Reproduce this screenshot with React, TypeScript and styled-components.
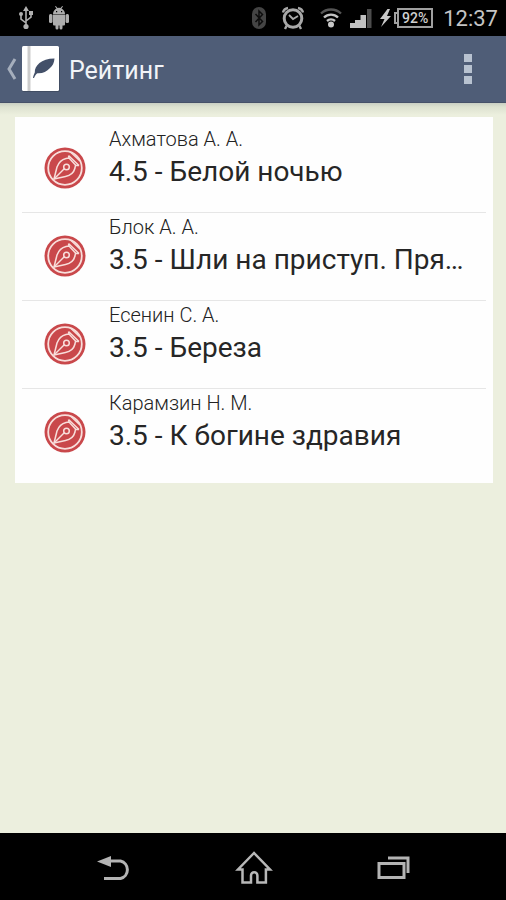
import React from "react";
import styled, { createGlobalStyle } from "styled-components";

const GlobalStyle = createGlobalStyle`
  * { box-sizing: border-box; }
  body { margin: 0; background: #ecefde; }
  button { border: 0; padding: 0; background: none; font: inherit; color: inherit; cursor: pointer; }
  svg { display: block; flex: none; }
`;

const Screen = styled.div`
  display: flex;
  flex-direction: column;
  min-height: 100vh;
  font-family: Roboto, "Noto Sans", sans-serif;
`;

const StatusBar = styled.div`
  display: flex;
  align-items: center;
  justify-content: space-between;
  height: 36px;
  padding: 0 8px 0 18px;
  background: #000;
  color: #c4c4c4;
`;

const StatusGroup = styled.div<{ $gap: number }>`
  display: flex;
  align-items: center;
  gap: ${(p) => p.$gap}px;
`;

const Power = styled.div`
  display: flex;
  align-items: center;
  gap: 3px;
`;

const Battery = styled.span`
  display: flex;
  align-items: center;
  justify-content: center;
  width: 36px;
  height: 20px;
  border: 2px solid #a0a0a0;
  font-size: 14px;
  line-height: 16px;
  font-weight: 500;
  color: #d0d0d0;
`;

const BatteryTip = styled.span`
  width: 3px;
  height: 12px;
  border: 2px solid #a0a0a0;
  border-right: 0;
`;

const BatteryBody = styled.span`
  display: flex;
  align-items: center;
`;

const Clock = styled.time`
  padding-top: 2px;
  font-size: 22px;
  line-height: 34px;
`;

const ActionBar = styled.header`
  display: flex;
  align-items: center;
  justify-content: space-between;
  height: 67px;
  padding: 0 16px 0 6px;
  background: #4f5d77;
  border-bottom: 1px solid #465168;
  color: #f2f4f8;
`;

const UpButton = styled.button`
  display: flex;
  align-items: center;
  gap: 5px;
`;

const Title = styled.h1`
  margin: 0;
  padding: 4px 0 0 4px;
  font-size: 25px;
  line-height: 32px;
  font-weight: 400;
`;

const MenuButton = styled.button`
  display: grid;
  place-items: center;
  width: 44px;
  height: 48px;
`;

const Content = styled.main`
  flex: 1;
  padding: 14px 13px 14px 15px;
  background: linear-gradient(#c9cfc3 0, #dde2d0 4px, #ecefde 12px);
`;

const Card = styled.ul`
  margin: 0;
  padding: 7px;
  list-style: none;
  background: #fefefe;
`;

const Row = styled.li`
  & + & { box-shadow: inset 0 1px #e6e6e6; }
`;

const RowButton = styled.button`
  display: flex;
  align-items: center;
  gap: 23px;
  width: 100%;
  height: 88px;
  padding: 0 14px 0 22px;
  text-align: left;
`;

const RowText = styled.span`
  display: flex;
  flex-direction: column;
  flex: 1;
  align-self: flex-start;
  min-width: 0;
  padding-top: 2px;
`;

const Author = styled.span`
  font-size: 20px;
  line-height: 26px;
  font-weight: 300;
  color: #222;
`;

const PoemTitle = styled.span`
  overflow: hidden;
  text-overflow: ellipsis;
  white-space: nowrap;
  font-size: 28px;
  line-height: 40px;
  color: #262626;
`;

const NavBar = styled.nav`
  display: grid;
  grid-template-columns: repeat(3, 1fr);
  height: 67px;
  padding: 2px 42px 0 44px;
  background: #000;
`;

const NavButton = styled.button`
  display: grid;
  place-items: center;
`;

const UsbIcon = () => (
  <svg width="16" height="24" viewBox="0 0 16 24" fill="none" stroke="#b0b0b0" strokeWidth="1.6">
    <path d="M8 4v16M8 17l-5-4V8M8 15l5-4V7" />
    <path d="M8 0l3 5H5z" fill="#b0b0b0" stroke="none" />
    <circle cx="8" cy="20.500" r="2.600" fill="#b0b0b0" stroke="none" />
    <circle cx="3" cy="8" r="2" fill="#b0b0b0" stroke="none" />
    <path d="M11 5h4v4h-4z" fill="#b0b0b0" stroke="none" />
  </svg>
);

const AndroidIcon = () => (
  <svg width="20" height="24" viewBox="0 0 20 24" fill="#adadad">
    <path d="M4 8c0-3 2-5 3.500-5.600L6 .6l.8-.6 1.700 2a6 6 0 0 1 3 0L13.200 0l.8.6-1.500 1.800C14.500 3.500 16 5.500 16 8z" />
    <path d="M4 8.500h12v10a1 1 0 0 1-1 1h-1.500V22a1.500 1.500 0 0 1-3 0v-2.500h-1V22a1.500 1.500 0 0 1-3 0v-2.500H5a1 1 0 0 1-1-1z" />
    <rect x="0" y="8" width="3.500" height="9" rx="1.500" />
    <rect x="16.500" y="8" width="3.500" height="9" rx="1.500" />
    <path d="M7 5h1.200v1.200H7zM12 5h1.200v1.200H12z" fill="#000" />
  </svg>
);

const BluetoothIcon = () => (
  <svg width="14" height="22" viewBox="0 0 14 22">
    <rect width="14" height="22" rx="7" fill="#444" />
    <path d="M3.500 7l7 7.500L7 18V4l3.500 3.500-7 7.500" fill="none" stroke="#0c0c0c" strokeWidth="1.500" />
  </svg>
);

const AlarmIcon = () => (
  <svg width="24" height="24" viewBox="0 0 24 24" fill="none" stroke="#a8a8a8" strokeWidth="2.400">
    <circle cx="12" cy="12.500" r="8.800" strokeWidth="3" />
    <path d="M8 9l4 4 5-3" strokeWidth="1.800" />
    <path d="M2 6.500C2.500 4 4 2.500 7 2M22 6.500C21.500 4 20 2.500 17 2M5.500 20L4 23M18.500 20l1.500 3" />
  </svg>
);

const WifiIcon = () => (
  <svg width="22" height="20" viewBox="0 0 22 20" fill="none" strokeWidth="2.400">
    <path d="M1 5.500a14.500 14.500 0 0 1 20 0" stroke="#555" />
    <path d="M4 9.500a10 10 0 0 1 14 0M7 13a6 6 0 0 1 8 0" stroke="#c4c4c4" />
    <circle cx="11" cy="16.500" r="3" fill="#c8c8c8" />
  </svg>
);

const SignalIcon = () => (
  <svg width="22" height="20" viewBox="0 0 22 20" fill="#c0c0c0">
    <path d="M0 15h5.500v5H0zM5 12h5.500v8H5zM10.500 7H16v13h-5.500z" />
    <path d="M17 1h4.500v19H17z" fill="#4c4c4c" />
  </svg>
);

const BoltIcon = () => (
  <svg width="11" height="18" viewBox="0 0 11 18" fill="#c8c8c8">
    <path d="M7.500 0L0 10h4.500L1 18l10-11H7L10 0z" />
  </svg>
);

const ChevronIcon = () => (
  <svg width="11" height="22" viewBox="0 0 11 22" fill="none" stroke="#a5aebc" strokeWidth="3">
    <path d="M9 1L3 11 9 21" />
  </svg>
);

const BookIcon = () => (
  <svg width="38" height="46" viewBox="0 0 38 46">
    <rect y="1" width="38" height="45" rx="2" fill="#414d63" />
    <rect width="37" height="45" rx="1.500" fill="#fff" />
    <path d="M5.500 0h3v45h-3z" fill="#ccc" />
    <path d="M11 32c.4-2.500 1-4 1.800-5.500C12.500 20 19 12.500 32.500 12.500c-.3 4.500-2 7.500-4.500 9.500-3.500 4-7.500 5.500-12.500 5.200-1 .3-2.400 2-3.500 4.800z" fill="#435069" />
  </svg>
);

const DotsIcon = () => (
  <svg width="8" height="30" viewBox="0 0 8 30" fill="#b8c2d0">
    <path d="M0 0h8v8H0zM0 11h8v8H0zM0 22h8v8H0z" />
  </svg>
);

const PenIcon = () => (
  <svg width="42" height="42" viewBox="0 0 42 42" fill="none" stroke="#f8dedb" strokeWidth="1.500" strokeLinejoin="round">
    <circle cx="21" cy="21" r="20.500" fill="#c9484b" stroke="none" />
    <circle cx="21" cy="21" r="16.800" strokeWidth="1.800" />
    <path d="M10 32l3-12c1.500-4 5-7.500 9-8.500l3-.5 6.500 7-.5 3c-1 4-4.500 7.500-9.500 8.500z" />
    <path d="M10 32l10.500-10.500" />
    <circle cx="22.500" cy="20" r="2.800" />
    <path d="M24.500 8.500l10.500 10M27 5.500l9 8.500M24.500 8.500l.5 2.500M35 18.500h-3.500" />
  </svg>
);

const BackIcon = () => (
  <svg width="34" height="26" viewBox="0 0 34 26" fill="none" stroke="#b4b4b4" strokeWidth="3">
    <path d="M11 6h12.500a9 9 0 0 1 0 17.500H7" />
    <path d="M0 6.500L14 1v11z" fill="#b4b4b4" stroke="none" />
  </svg>
);

const HomeIcon = () => (
  <svg width="38" height="34" viewBox="0 0 38 34" fill="none" stroke="#b8b8b8" strokeWidth="2.500">
    <path d="M19 2L3 18.500h4.500v13H16v-7a3.200 3.200 0 0 1 6.400 0v7h8.500v-13H35z" />
  </svg>
);

const RecentsIcon = () => (
  <svg width="34" height="24" viewBox="0 0 34 24" fill="none" stroke="#b4b4b4" strokeWidth="3">
    <path d="M2 7.500h25v14H2z" />
    <path d="M11 2h20v15" />
  </svg>
);

const poems = [
  { author: "Ахматова А. А.", title: "4.5 - Белой ночью" },
  { author: "Блок А. А.", title: "3.5 - Шли на приступ. Пря…" },
  { author: "Есенин С. А.", title: "3.5 - Береза" },
  { author: "Карамзин Н. М.", title: "3.5 - К богине здравия" },
];

export default function App() {
  return (
    <Screen>
      <GlobalStyle />
      <StatusBar>
        <StatusGroup $gap={15}>
          <UsbIcon />
          <AndroidIcon />
        </StatusGroup>
        <StatusGroup $gap={10}>
          <StatusGroup $gap={8}>
            <StatusGroup $gap={15}>
              <BluetoothIcon />
              <AlarmIcon />
              <WifiIcon />
            </StatusGroup>
            <SignalIcon />
            <Power>
              <BoltIcon />
              <BatteryBody>
                <BatteryTip />
                <Battery>92%</Battery>
              </BatteryBody>
            </Power>
          </StatusGroup>
          <Clock>12:37</Clock>
        </StatusGroup>
      </StatusBar>
      <ActionBar>
        <UpButton>
          <ChevronIcon />
          <BookIcon />
          <Title>Рейтинг</Title>
        </UpButton>
        <MenuButton aria-label="Меню">
          <DotsIcon />
        </MenuButton>
      </ActionBar>
      <Content>
        <Card>
          {poems.map((poem) => (
            <Row key={poem.author}>
              <RowButton>
                <PenIcon />
                <RowText>
                  <Author>{poem.author}</Author>
                  <PoemTitle>{poem.title}</PoemTitle>
                </RowText>
              </RowButton>
            </Row>
          ))}
        </Card>
      </Content>
      <NavBar>
        <NavButton aria-label="Назад"><BackIcon /></NavButton>
        <NavButton aria-label="Домой"><HomeIcon /></NavButton>
        <NavButton aria-label="Недавние"><RecentsIcon /></NavButton>
      </NavBar>
    </Screen>
  );
}
